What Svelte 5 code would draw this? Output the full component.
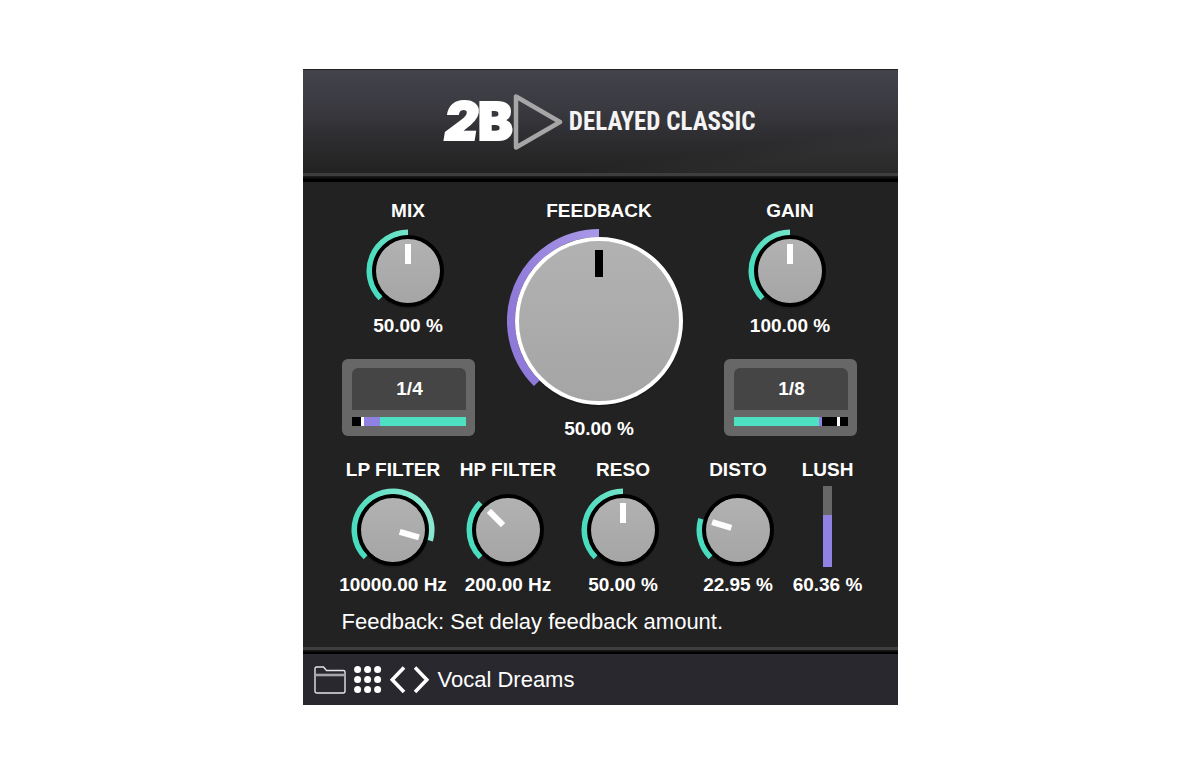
<script>
  const START = -135;
  const SWEEP = 270;

  let mix = $state({ id: 'mix', label: 'MIX', turn: 50, text: '50.00 %' });
  let feedback = $state({ id: 'feedback', label: 'FEEDBACK', turn: 50, text: '50.00 %' });
  let gain = $state({ id: 'gain', label: 'GAIN', turn: 50, text: '100.00 %' });

  let filters = $state([
    { id: 'lp', label: 'LP FILTER', turn: 89.3, text: '10000.00 Hz' },
    { id: 'hp', label: 'HP FILTER', turn: 33.3, text: '200.00 Hz' },
    { id: 'reso', label: 'RESO', turn: 50, text: '50.00 %' },
    { id: 'disto', label: 'DISTO', turn: 22.95, text: '22.95 %' }
  ]);

  let lush = $state(60.36);
  let leftTime = $state('1/4');
  let rightTime = $state('1/8');

  const times = ['1/2', '1/4', '1/8', '1/16'];

  const small = { size: 84, arc: 38.5, arcWidth: 6, rim: 34, rimWidth: 4, face: 32.5, tick: 6, from: 27, to: 7 };
  const large = { size: 184, arc: 88, arcWidth: 8, rim: 82, rimWidth: 4, face: 80.5, tick: 8, from: 71, to: 44 };

  function angle(turn) {
    return START + (turn / 100) * SWEEP;
  }

  function point(c, r, deg) {
    const rad = (deg * Math.PI) / 180;
    return `${(c + r * Math.sin(rad)).toFixed(2)} ${(c - r * Math.cos(rad)).toFixed(2)}`;
  }

  function arcPath(dim, turn) {
    const c = dim.size / 2;
    const big = (turn / 100) * SWEEP > 180 ? 1 : 0;
    return `M${point(c, dim.arc, START)} A${dim.arc} ${dim.arc} 0 ${big} 1 ${point(c, dim.arc, angle(turn))}`;
  }
</script>

{#snippet knob(item, dim, big)}
  {@const c = dim.size / 2}
  <div class="control" class:big>
    <label for={item.id}>{item.label}</label>
    <div class="knob">
      <svg width={dim.size} height={dim.size} viewBox="0 0 {dim.size} {dim.size}" aria-hidden="true">
        <defs>
          <linearGradient id="arc-{item.id}" gradientUnits="userSpaceOnUse" x1="0" y1={c * 1.2} x2={dim.size} y2={c * 0.5}>
            <stop offset="0.1" stop-color={big ? '#8f7ad9' : '#4adcbe'} />
            <stop offset="1" stop-color={big ? '#bcaef2' : '#92e9d3'} />
          </linearGradient>
          <linearGradient id="face-{item.id}" x1="0" y1="0" x2="0" y2="1">
            <stop offset="0" stop-color="#b2b2b2" />
            <stop offset="1" stop-color="#a5a5a5" />
          </linearGradient>
        </defs>
        <circle cx={c} cy={c + 2} r={dim.rim + 2} fill="#000" fill-opacity="0.15" />
        <path d={arcPath(dim, item.turn)} fill="none" stroke="url(#arc-{item.id})" stroke-width={dim.arcWidth} />
        <circle cx={c} cy={c} r={dim.face} fill="url(#face-{item.id})" />
        <circle cx={c} cy={c} r={dim.rim} fill="none" stroke={big ? '#fff' : '#000'} stroke-width={dim.rimWidth} />
        <rect
          x={c - dim.tick / 2}
          y={c - dim.from}
          width={dim.tick}
          height={dim.from - dim.to}
          fill={big ? '#000' : '#fff'}
          transform="rotate({angle(item.turn)} {c} {c})"
        />
      </svg>
      <input id={item.id} type="range" min="0" max="100" step="any" bind:value={item.turn} />
    </div>
    <output for={item.id}>{item.text}</output>
  </div>
{/snippet}

<main>
  <div class="plugin">
    <header>
      <span class="mark"><i>2</i><span>B</span></span>
      <svg class="play" width="50" height="58" viewBox="0 0 50 58" aria-hidden="true">
        <path d="M3 3.5V54.5L47 29Z" fill="none" stroke="#a6a6a6" stroke-width="4.5" stroke-linejoin="round" />
      </svg>
      <h1>DELAYED CLASSIC</h1>
    </header>
    <div class="ridge"></div>

    <section class="top">
      <div class="side">
        {@render knob(mix, small, false)}
        <div class="sync">
          <select aria-label="Left delay time" bind:value={leftTime}>
            {#each times as time}
              <option>{time}</option>
            {/each}
          </select>
          <div class="meter">
            <span class="black w9"></span>
            <span class="white"></span>
            <span class="purple w16"></span>
            <span class="teal"></span>
          </div>
        </div>
      </div>

      {@render knob(feedback, large, true)}

      <div class="side">
        {@render knob(gain, small, false)}
        <div class="sync">
          <select aria-label="Right delay time" bind:value={rightTime}>
            {#each times as time}
              <option>{time}</option>
            {/each}
          </select>
          <div class="meter">
            <span class="teal"></span>
            <span class="purple w3"></span>
            <span class="black w15"></span>
            <span class="white"></span>
            <span class="black w8"></span>
          </div>
        </div>
      </div>
    </section>

    <section class="bottom">
      {#each filters as item (item.id)}
        {@render knob(item, small, false)}
      {/each}
      <div class="control">
        <label for="lush">LUSH</label>
        <input
          id="lush"
          class="fader"
          type="range"
          min="0"
          max="100"
          step="any"
          bind:value={lush}
          style="--level: {lush * 1.06}%"
        />
        <output for="lush">{lush.toFixed(2)} %</output>
      </div>
    </section>

    <p class="help">Feedback: Set delay feedback amount.</p>

    <div class="ridge thin"></div>
    <footer>
      <button aria-label="Open preset folder">
        <svg width="32" height="28" viewBox="0 0 32 28" fill="none" stroke="#e4e4e6">
          <path d="M1 25V2.5Q1 1 2.5 1H9.5L12.5 4.5H29.5Q31 4.5 31 6V25Q31 27 29 27H3Q1 27 1 25Z" stroke-width="1.4" />
          <path d="M1 9H31" stroke="#a5a5a8" stroke-width="2.6" />
        </svg>
      </button>
      <button aria-label="Preset grid">
        <svg width="28" height="28" viewBox="0 0 28 28" fill="#fff">
          {#each [3.6, 13.6, 23.6] as y}
            {#each [3.6, 13.6, 23.6] as x}
              <circle cx={x} cy={y} r="3.5" />
            {/each}
          {/each}
        </svg>
      </button>
      <button aria-label="Previous preset">
        <svg width="16" height="28" viewBox="0 0 16 28" fill="none" stroke="#fff" stroke-width="3.6">
          <path d="M14 1.5L2.2 13.8L14 26" />
        </svg>
      </button>
      <button aria-label="Next preset">
        <svg width="16" height="28" viewBox="0 0 16 28" fill="none" stroke="#fff" stroke-width="3.6">
          <path d="M1 1.5L12.8 13.8L1 26" />
        </svg>
      </button>
      <span class="preset">Vocal Dreams</span>
    </footer>
  </div>
</main>

<style>
  :global(body) {
    background: #fff;
  }

  main {
    display: flex;
    align-items: center;
    justify-content: center;
    min-height: 100vh;
    font-family: "Liberation Sans", Arial, sans-serif;
    color: #fff;
  }

  .plugin {
    width: 100%;
    max-width: 595px;
    background: #222;
  }

  header {
    display: flex;
    align-items: center;
    justify-content: center;
    box-sizing: border-box;
    height: 104px;
    border-top: 1px solid #222;
    background:
      linear-gradient(172deg, transparent 74%, rgba(255, 255, 255, 0.03) 84%),
      linear-gradient(#43434c, #3a3a41 35%, #2a2a2c 75%, #222);
  }

  .mark {
    display: flex;
    font-family: Inter, sans-serif;
    font-size: 52px;
    font-weight: 900;
    line-height: 56px;
    -webkit-text-stroke: 2px #fff;
  }

  .play {
    margin-right: 6px;
  }

  h1 {
    margin: 0;
    font-family: "Liberation Sans Narrow", "Roboto Condensed", "Liberation Sans", sans-serif;
    font-size: 25px;
    font-weight: bold;
    line-height: 28px;
    color: #f4f4f4;
    white-space: nowrap;
  }

  .ridge {
    height: 9px;
    background: linear-gradient(#3e3e3e 3px, #1c1c1c 3px, #111 5px, #000 6px);
  }

  .ridge.thin {
    height: 7px;
    background: linear-gradient(#3e3e3e 3px, #1c1c1c 3px, #000 6px);
  }

  .top {
    display: grid;
    grid-template-columns: 133px 1fr 133px;
    padding: 18px 41px 19px 39px;
  }

  .side {
    display: flex;
    flex-direction: column;
    gap: 22px;
  }

  .control {
    display: flex;
    flex-direction: column;
    align-items: center;
  }

  label,
  output {
    font-size: 19px;
    font-weight: bold;
    line-height: 22px;
    white-space: nowrap;
  }

  .knob {
    position: relative;
    margin: 7px 0 2px;
  }

  .big .knob {
    margin-bottom: 5px;
  }

  svg {
    display: block;
  }

  .knob input {
    position: absolute;
    inset: 0;
    width: 100%;
    height: 100%;
    margin: 0;
    opacity: 0;
    cursor: pointer;
  }

  .sync {
    display: flex;
    flex-direction: column;
    gap: 7px;
    padding: 9px 9px 10px 10px;
    border-radius: 6px;
    background: #676767;
  }

  select {
    appearance: none;
    width: 100%;
    height: 42px;
    padding: 0 0 2px 2px;
    border: 0;
    border-radius: 6px 6px 0 0;
    background: #454545;
    color: #fff;
    font: bold 19px "Liberation Sans", Arial, sans-serif;
    text-align: center;
    text-align-last: center;
  }

  .meter {
    display: flex;
    height: 9px;
  }

  .black {
    background: #000;
  }

  .white {
    width: 3px;
    background: #fff;
  }

  .purple {
    background: #9082e2;
  }

  .teal {
    flex: 1;
    background: #4de0c1;
  }

  .w3 {
    width: 3px;
  }

  .w8 {
    width: 8px;
  }

  .w9 {
    width: 9px;
  }

  .w15 {
    width: 15px;
  }

  .w16 {
    width: 16px;
  }

  .bottom {
    display: grid;
    grid-template-columns: repeat(4, 1fr) 64px;
    padding: 0 38px 0 33px;
  }

  .fader {
    appearance: none;
    writing-mode: vertical-lr;
    direction: rtl;
    width: 9px;
    height: 81px;
    margin: 5px 0 7px;
    background: linear-gradient(to top, #9082e2 var(--level), #676767 var(--level));
  }

  .fader::-webkit-slider-thumb {
    appearance: none;
    width: 9px;
    height: 1px;
    background: transparent;
  }

  .help {
    margin: 0;
    padding: 13px 39px 12px;
    font-size: 22px;
    line-height: 26px;
  }

  footer {
    display: flex;
    align-items: center;
    gap: 8px;
    height: 51px;
    padding-left: 11px;
    background: #29282f;
  }

  button {
    padding: 0;
    border: 0;
    background: none;
    cursor: pointer;
  }

  .preset {
    font-size: 22px;
    line-height: 26px;
  }
</style>
